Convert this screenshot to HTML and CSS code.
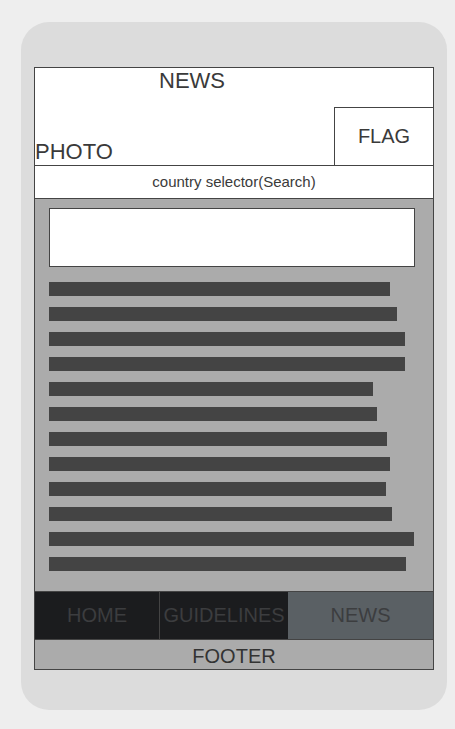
FILE: index.html
```html
<!DOCTYPE html>
<html>
<head>
<meta charset="utf-8">
<link rel="stylesheet" href="styles.css">
</head>
<body>
<div class="phone">
  <div class="frame">
    <div class="header">
      <div class="title">NEWS</div>
      <div class="header-bottom">
        <div class="photo">PHOTO</div>
        <div class="flag">FLAG</div>
      </div>
    </div>
    <div class="selector">country selector(Search)</div>
    <div class="content">
      <div class="search"></div>
      <div class="bars">
        <div class="bar" style="width:341px"></div>
        <div class="bar" style="width:348px"></div>
        <div class="bar" style="width:356px"></div>
        <div class="bar" style="width:356px"></div>
        <div class="bar" style="width:324px"></div>
        <div class="bar" style="width:328px"></div>
        <div class="bar" style="width:338px"></div>
        <div class="bar" style="width:341px"></div>
        <div class="bar" style="width:337px"></div>
        <div class="bar" style="width:343px"></div>
        <div class="bar" style="width:365px"></div>
        <div class="bar" style="width:357px"></div>
      </div>
    </div>
    <div class="nav">
      <div class="nav-item home">HOME</div>
      <div class="nav-item guide">GUIDELINES</div>
      <div class="nav-item active">NEWS</div>
    </div>
    <div class="footer">FOOTER</div>
  </div>
</div>
</body>
</html>
```
FILE: styles.css
```css
html, body {
  margin: 0;
  padding: 0;
  background: #eeeeee;
}
body {
  font-family: "Liberation Sans", Arial, sans-serif;
  color: #3a3a3a;
  padding: 22px 0 0 21px;
}
.phone {
  width: 426px;
  height: 688px;
  box-sizing: border-box;
  background: #dcdcdc;
  border-radius: 28px;
  padding: 45px 13px 0 13px;
}
.frame {
  width: 400px;
  box-sizing: border-box;
  border: 1px solid #444;
  background: #fff;
}
.header {
  height: 97px;
  border-bottom: 1px solid #444;
  display: flex;
  flex-direction: column;
}
.title {
  font-size: 22px;
  padding-left: 124px;
  height: 39px;
}
.header-bottom {
  flex: 1;
  display: flex;
}
.photo {
  flex: 1;
  font-size: 22px;
  display: flex;
  align-items: flex-end;
}
.flag {
  width: 98px;
  border-left: 1px solid #444;
  border-top: 1px solid #444;
  font-size: 20px;
  display: flex;
  align-items: center;
  justify-content: center;
}
.selector {
  height: 31px;
  padding-bottom: 1px;
  border-bottom: 1px solid #444;
  font-size: 15px;
  display: flex;
  align-items: center;
  justify-content: center;
}
.content {
  height: 393px;
  box-sizing: border-box;
  background: #ababab;
  border-bottom: 1px solid #444;
  padding: 9px 0 0 14px;
}
.search {
  width: 366px;
  height: 59px;
  box-sizing: border-box;
  background: #fff;
  border: 1px solid #444;
}
.bars {
  margin-top: 15px;
  display: flex;
  flex-direction: column;
  gap: 11px;
}
.bar {
  height: 14px;
  background: #444444;
}
.nav {
  height: 47px;
  border-bottom: 1px solid #444;
  display: flex;
  font-size: 20px;
}
.nav-item {
  display: flex;
  align-items: center;
  justify-content: center;
  color: #3c3d3f;
  white-space: nowrap;
}
.home {
  width: 124px;
  background: #1b1c1e;
  border-right: 1px solid #444;
}
.guide {
  width: 128px;
  background: #1b1c1e;
}
.active {
  flex: 1;
  background: #5a6064;
}
.footer {
  height: 29px;
  box-sizing: border-box;
  padding-top: 5px;
  background: #ababab;
  font-size: 20px;
  text-align: center;
  color: #333;
}
```
